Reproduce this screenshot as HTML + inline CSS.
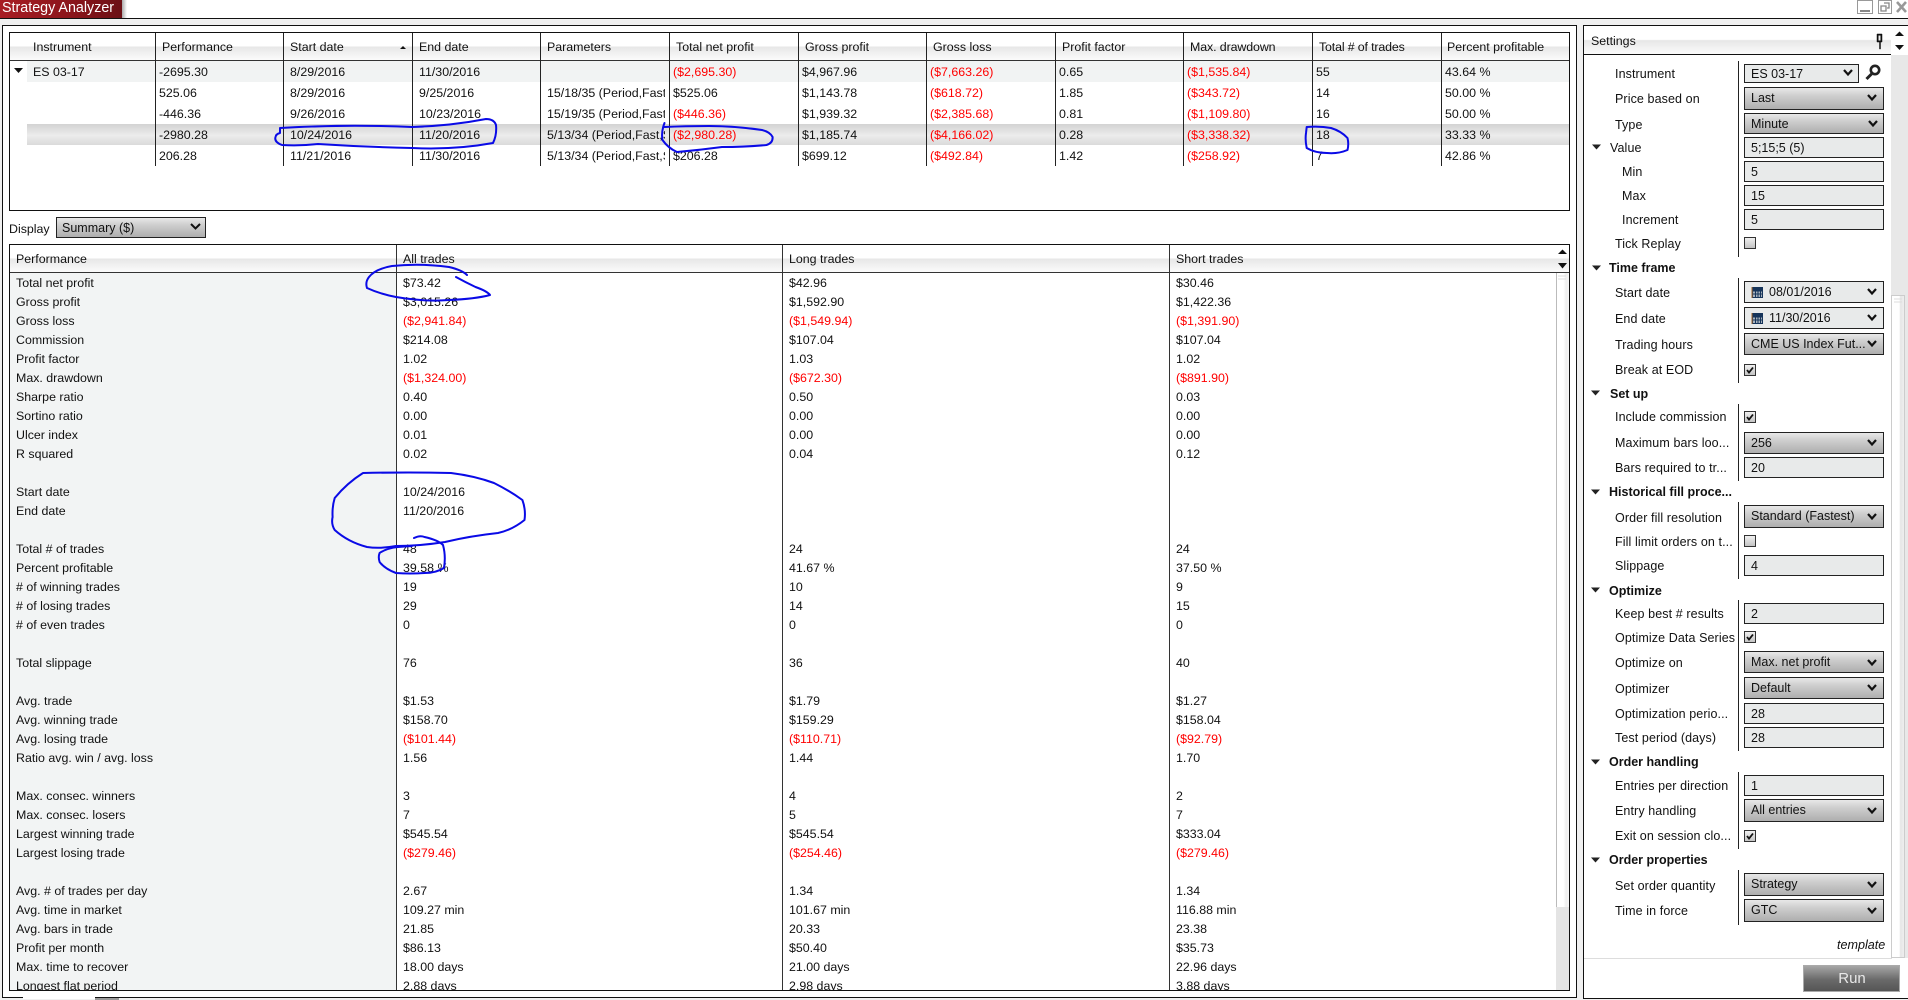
<!DOCTYPE html>
<html>
<head>
<meta charset="utf-8">
<title>Strategy Analyzer</title>
<style>
html,body{margin:0;padding:0;width:1908px;height:1000px;overflow:hidden;background:#f0f0f0}
body{position:relative;font-family:"Liberation Sans",Arial,sans-serif;font-size:12.4px;color:#111}
div,span{position:absolute;box-sizing:border-box}
span{white-space:nowrap}
.col{white-space:pre;line-height:21px}
.pc{white-space:pre;line-height:19px}
.r{color:#f00}
.hd{background:linear-gradient(#fff 0,#fff 48%,#e7e7e7 52%,#fbfbfb 100%)}
.ln{width:1px;background:#222}
.h{top:38px;line-height:18px}
.h2{top:250px;line-height:18px}
.lb{left:1615px;line-height:18px;font-size:12.5px;letter-spacing:.1px}
.lb2{left:1622px;line-height:18px;font-size:12.5px;letter-spacing:.1px}
.sec{left:1609px;line-height:18px;font-size:12.5px;font-weight:bold}
.sel{left:1744px;width:140px;border:1px solid #222;background:linear-gradient(#e8e8e8,#cfcfcf 35%,#aeaeae 100%);line-height:21px;padding-left:6px;font-size:12.5px}
.inp{left:1744px;width:140px;border:1px solid #222;background:#e8eaea;line-height:20px;padding-left:6px;font-size:12.5px}
.chk{left:1744px;width:12px;height:12px;border:1px solid #333;background:linear-gradient(#f0f0f0,#c4c4c4)}
.v{left:1738px;width:1px;background:#222}
svg{position:absolute;overflow:visible}
</style>
</head>
<body>

<!-- top strip -->
<div style="left:0;top:0;width:1908px;height:18px;background:#fff"></div>
<div style="left:122px;top:0;width:5px;height:18px;background:linear-gradient(90deg,#aaa,#fff)"></div>
<div style="left:0;top:0;width:122px;height:18px;background:linear-gradient(90deg,#a81d24,#8a151b 60%,#6b1015);color:#fff;font-size:14.3px;line-height:16px;padding-left:2px;overflow:hidden">Strategy Analyzer</div>
<div style="left:0;top:18px;width:1908px;height:1px;background:#111"></div>

<!-- window buttons -->
<svg style="left:0;top:0" width="1908" height="18" fill="none">
<rect x="1857.5" y="0.5" width="15" height="13" stroke="#999"/><path d="M1860 11h10" stroke="#888" stroke-width="2"/>
<rect x="1878.5" y="0.5" width="13" height="13" stroke="#999"/><path d="M1884 3h5v5h-2M1881 6h5v5h-5z" stroke="#888" stroke-width="1.3"/>
<path d="M1897 2l9 10M1906 2l-9 10" stroke="#999" stroke-width="2.6"/>
</svg>

<!-- left panel -->
<div style="left:2px;top:25px;width:1575px;height:973px;background:#fff;border:1px solid #111;border-left-width:1px"></div>
<div style="left:23px;top:996px;width:72px;height:3px;background:#fff"></div>
<div style="left:95px;top:998px;width:24px;height:2px;background:#999"></div>

<!-- top grid -->
<div style="left:9px;top:32px;width:1561px;height:179px;border:1px solid #111;background:#fff"></div>
<div class="hd" style="left:10px;top:33px;width:1559px;height:27px"></div>
<div style="left:10px;top:60px;width:1559px;height:1px;background:#333"></div>
<div style="left:27px;top:61px;width:1542px;height:21px;background:#f1f3f3"></div>
<div style="left:27px;top:124px;width:1542px;height:21px;background:linear-gradient(#d3d3d3,#ececec 55%,#dadada)"></div>

<div class="ln" style="left:155px;top:33px;height:133px"></div>
<div class="ln" style="left:283px;top:33px;height:133px"></div>
<div class="ln" style="left:412px;top:33px;height:133px"></div>
<div class="ln" style="left:540px;top:33px;height:133px"></div>
<div class="ln" style="left:669px;top:33px;height:133px"></div>
<div class="ln" style="left:798px;top:33px;height:133px"></div>
<div class="ln" style="left:926px;top:33px;height:133px"></div>
<div class="ln" style="left:1055px;top:33px;height:133px"></div>
<div class="ln" style="left:1183px;top:33px;height:133px"></div>
<div class="ln" style="left:1312px;top:33px;height:133px"></div>
<div class="ln" style="left:1441px;top:33px;height:133px"></div>

<span class="h" style="left:33px">Instrument</span>
<span class="h" style="left:162px">Performance</span>
<span class="h" style="left:290px">Start date</span>
<span class="h" style="left:419px">End date</span>
<span class="h" style="left:547px">Parameters</span>
<span class="h" style="left:676px">Total net profit</span>
<span class="h" style="left:805px">Gross profit</span>
<span class="h" style="left:933px">Gross loss</span>
<span class="h" style="left:1062px">Profit factor</span>
<span class="h" style="left:1190px;letter-spacing:-.1px">Max. drawdown</span>
<span class="h" style="left:1319px;letter-spacing:-.15px">Total # of trades</span>
<span class="h" style="left:1447px">Percent profitable</span>
<svg style="left:0;top:0" width="10" height="10"><path d="M400 49h6l-3-3z" fill="#111"/><path d="M14 68h9l-4.500 5z" fill="#111"/></svg>

<div class="col" style="left:33px;top:62px">ES 03-17</div>
<div class="col" style="left:159px;top:62px">-2695.30
525.06
-446.36
-2980.28
206.28</div>
<div class="col" style="left:290px;top:62px">8/29/2016
8/29/2016
9/26/2016
10/24/2016
11/21/2016</div>
<div class="col" style="left:419px;top:62px">11/30/2016
9/25/2016
10/23/2016
11/20/2016
11/30/2016</div>
<div class="col" style="left:547px;top:62px;width:118px;height:105px;overflow:hidden"> 
15/18/35 (Period,Fast,Slow)
15/19/35 (Period,Fast,Slow)
5/13/34 (Period,Fast,Slow)
5/13/34 (Period,Fast,Slow)</div>
<div class="col r" style="left:673px;top:62px">($2,695.30)</div>
<div class="col" style="left:673px;top:83px">$525.06</div>
<div class="col r" style="left:673px;top:104px">($446.36)
($2,980.28)</div>
<div class="col" style="left:673px;top:146px">$206.28</div>
<div class="col" style="left:802px;top:62px">$4,967.96
$1,143.78
$1,939.32
$1,185.74
$699.12</div>
<div class="col r" style="left:930px;top:62px">($7,663.26)
($618.72)
($2,385.68)
($4,166.02)
($492.84)</div>
<div class="col" style="left:1059px;top:62px">0.65
1.85
0.81
0.28
1.42</div>
<div class="col r" style="left:1187px;top:62px">($1,535.84)
($343.72)
($1,109.80)
($3,338.32)
($258.92)</div>
<div class="col" style="left:1316px;top:62px">55
14
16
18
7</div>
<div class="col" style="left:1445px;top:62px">43.64 %
50.00 %
50.00 %
33.33 %
42.86 %</div>

<!-- display -->
<span style="left:9px;top:220px;line-height:18px">Display</span>
<div class="sel" style="left:56px;top:217px;width:150px;height:21px;line-height:20px;padding-left:5px">Summary ($)</div>
<svg style="left:0;top:0" width="10" height="10" fill="none"><path d="M191 224l4.500 4.500 4.500-4.500" stroke="#111" stroke-width="2"/></svg>

<!-- performance grid -->
<div style="left:9px;top:244px;width:1561px;height:747px;border:1px solid #111;background:#fff"></div>
<div class="hd" style="left:10px;top:245px;width:1559px;height:27px"></div>
<div style="left:10px;top:272px;width:1559px;height:1px;background:#333"></div>
<div style="left:10px;top:273px;width:386px;height:717px;background:#f2f4f4"></div>
<div class="ln" style="left:396px;top:245px;height:745px;background:#333"></div>
<div class="ln" style="left:782px;top:245px;height:745px;background:#333"></div>
<div class="ln" style="left:1169px;top:245px;height:745px;background:#333"></div>
<span class="h2" style="left:16px">Performance</span>
<span class="h2" style="left:403px">All trades</span>
<span class="h2" style="left:789px">Long trades</span>
<span class="h2" style="left:1176px">Short trades</span>

<div class="pc" style="left:16px;top:274px;width:370px;height:716px;overflow:hidden">Total net profit
Gross profit
Gross loss
Commission
Profit factor
Max. drawdown
Sharpe ratio
Sortino ratio
Ulcer index
R squared
 
Start date
End date
 
Total # of trades
Percent profitable
# of winning trades
# of losing trades
# of even trades
 
Total slippage
 
Avg. trade
Avg. winning trade
Avg. losing trade
Ratio avg. win / avg. loss
 
Max. consec. winners
Max. consec. losers
Largest winning trade
Largest losing trade
 
Avg. # of trades per day
Avg. time in market
Avg. bars in trade
Profit per month
Max. time to recover
Longest flat period</div>

<div class="pc" style="left:403px;top:274px;width:370px;height:716px;overflow:hidden">$73.42
$3,015.26
<b class="r" style="font-weight:normal">($2,941.84)</b>
$214.08
1.02
<b class="r" style="font-weight:normal">($1,324.00)</b>
0.40
0.00
0.01
0.02
 
10/24/2016
11/20/2016
 
48
39.58 %
19
29
0
 
76
 
$1.53
$158.70
<b class="r" style="font-weight:normal">($101.44)</b>
1.56
 
3
7
$545.54
<b class="r" style="font-weight:normal">($279.46)</b>
 
2.67
109.27 min
21.85
$86.13
18.00 days
2.88 days</div>

<div class="pc" style="left:789px;top:274px;width:370px;height:716px;overflow:hidden">$42.96
$1,592.90
<b class="r" style="font-weight:normal">($1,549.94)</b>
$107.04
1.03
<b class="r" style="font-weight:normal">($672.30)</b>
0.50
0.00
0.00
0.04
 
 
 
 
24
41.67 %
10
14
0
 
36
 
$1.79
$159.29
<b class="r" style="font-weight:normal">($110.71)</b>
1.44
 
4
5
$545.54
<b class="r" style="font-weight:normal">($254.46)</b>
 
1.34
101.67 min
20.33
$50.40
21.00 days
2.98 days</div>

<div class="pc" style="left:1176px;top:274px;width:370px;height:716px;overflow:hidden">$30.46
$1,422.36
<b class="r" style="font-weight:normal">($1,391.90)</b>
$107.04
1.02
<b class="r" style="font-weight:normal">($891.90)</b>
0.03
0.00
0.00
0.12
 
 
 
 
24
37.50 %
9
15
0
 
40
 
$1.27
$158.04
<b class="r" style="font-weight:normal">($92.79)</b>
1.70
 
2
7
$333.04
<b class="r" style="font-weight:normal">($279.46)</b>
 
1.34
116.88 min
23.38
$35.73
22.96 days
3.88 days</div>

<!-- perf scrollbar -->
<div style="left:1556px;top:273px;width:13px;height:634px;background:linear-gradient(90deg,#fff,#fff 55%,#eee 75%,#f6f6f6);border-left:1px solid #bbb"></div>
<div style="left:1556px;top:907px;width:13px;height:83px;background:#e4e4e4"></div>
<svg style="left:0;top:0" width="10" height="10" fill="none">
<path d="M1558 254h9l-4.500-4.500z" fill="#111"/><path d="M1558 263h9l-4.500 5.500z" fill="#111"/>
<path d="M1558 276h8M1558 279h8" stroke="#ddd"/>
</svg>

<!-- settings panel -->
<div style="left:1583px;top:25px;width:326px;height:974px;background:#fff;border:1px solid #111"></div>
<div class="hd" style="left:1584px;top:26px;width:307px;height:28px"></div>
<div style="left:1584px;top:54px;width:307px;height:1px;background:#111"></div>
<span style="left:1591px;top:32px;line-height:18px">Settings</span>
<div style="left:1891px;top:26px;width:17px;height:29px;background:#fff"></div>
<div style="left:1891px;top:55px;width:17px;height:240px;background:#e8e8e8"></div>
<div style="left:1891px;top:295px;width:17px;height:663px;background:#e8e8e8"></div>
<div style="left:1891px;top:295px;width:14px;height:663px;border:1px solid #ccc;background:linear-gradient(90deg,#fff,#fff 60%,#e6e6e6 70%,#eee)"></div>
<div style="left:1584px;top:958px;width:308px;height:1px;background:#ddd"></div>
<svg style="left:0;top:0" width="10" height="10" fill="none">
<path d="M1895 36h9l-4.500-4.500z" fill="#111"/><path d="M1895 45h9l-4.500 5z" fill="#111"/>
<path d="M1877 34h5v8h-1.500v7h-1v-7h-2.500z" fill="#111" stroke="#111" stroke-width=".5"/>
<path d="M1878.500 35.500h2v5h-2z" fill="#eee"/>
<path d="M1894 299h8M1894 302h8" stroke="#ddd"/>
</svg>

<!-- settings vertical lines -->
<div class="v" style="top:61px;height:196px"></div>
<div class="v" style="top:278px;height:105px"></div>
<div class="v" style="top:404px;height:77px"></div>
<div class="v" style="top:502px;height:77px"></div>
<div class="v" style="top:600px;height:151px"></div>
<div class="v" style="top:772px;height:77px"></div>
<div class="v" style="top:870px;height:55px"></div>

<!-- settings labels -->
<span class="lb" style="top:65px">Instrument</span>
<span class="lb" style="top:90px">Price based on</span>
<span class="lb" style="top:116px">Type</span>
<span class="lb" style="left:1610px;top:139px">Value</span>
<span class="lb2" style="top:163px">Min</span>
<span class="lb2" style="top:187px">Max</span>
<span class="lb2" style="top:211px">Increment</span>
<span class="lb" style="top:235px">Tick Replay</span>
<span class="sec" style="top:259px">Time frame</span>
<span class="lb" style="top:284px">Start date</span>
<span class="lb" style="top:310px">End date</span>
<span class="lb" style="top:336px">Trading hours</span>
<span class="lb" style="top:361px">Break at EOD</span>
<span class="sec" style="top:385px;left:1610px">Set up</span>
<span class="lb" style="top:408px">Include commission</span>
<span class="lb" style="top:434px">Maximum bars loo...</span>
<span class="lb" style="top:459px">Bars required to tr...</span>
<span class="sec" style="top:483px">Historical fill proce...</span>
<span class="lb" style="top:509px">Order fill resolution</span>
<span class="lb" style="top:533px">Fill limit orders on t...</span>
<span class="lb" style="top:557px">Slippage</span>
<span class="sec" style="top:582px">Optimize</span>
<span class="lb" style="top:605px">Keep best # results</span>
<span class="lb" style="top:629px">Optimize Data Series</span>
<span class="lb" style="top:654px">Optimize on</span>
<span class="lb" style="top:680px">Optimizer</span>
<span class="lb" style="top:705px">Optimization perio...</span>
<span class="lb" style="top:729px">Test period (days)</span>
<span class="sec" style="top:753px">Order handling</span>
<span class="lb" style="top:777px">Entries per direction</span>
<span class="lb" style="top:802px">Entry handling</span>
<span class="lb" style="top:827px">Exit on session clo...</span>
<span class="sec" style="top:851px">Order properties</span>
<span class="lb" style="top:877px">Set order quantity</span>
<span class="lb" style="top:902px">Time in force</span>
<span style="left:1837px;top:936px;line-height:18px;font-style:italic;font-size:12.6px">template</span>

<!-- controls -->
<div class="inp" style="top:64px;width:115px;height:19px;line-height:18px">ES 03-17</div>
<div class="sel" style="top:87px;height:23px">Last</div>
<div class="sel" style="top:113px;height:21px;line-height:20px">Minute</div>
<div class="inp" style="top:137px;height:21px">5;15;5 (5)</div>
<div class="inp" style="top:161px;height:21px">5</div>
<div class="inp" style="top:185px;height:21px">15</div>
<div class="inp" style="top:209px;height:21px">5</div>
<div class="chk" style="top:237px"></div>
<div class="inp" style="top:281px;height:22px;line-height:21px;padding-left:24px">08/01/2016</div>
<div class="inp" style="top:307px;height:22px;line-height:21px;padding-left:24px">11/30/2016</div>
<div class="sel" style="top:333px;height:22px">CME US Index Fut...</div>
<div class="chk" style="top:364px"></div>
<div class="chk" style="top:411px"></div>
<div class="sel" style="top:432px;height:22px">256</div>
<div class="inp" style="top:457px;height:21px">20</div>
<div class="sel" style="top:505px;height:23px">Standard (Fastest)</div>
<div class="chk" style="top:535px"></div>
<div class="inp" style="top:555px;height:21px">4</div>
<div class="inp" style="top:603px;height:21px">2</div>
<div class="chk" style="top:631px"></div>
<div class="sel" style="top:651px;height:22px">Max. net profit</div>
<div class="sel" style="top:677px;height:22px">Default</div>
<div class="inp" style="top:703px;height:21px">28</div>
<div class="inp" style="top:727px;height:21px">28</div>
<div class="inp" style="top:775px;height:21px">1</div>
<div class="sel" style="top:799px;height:23px">All entries</div>
<div class="chk" style="top:830px"></div>
<div class="sel" style="top:873px;height:23px">Strategy</div>
<div class="sel" style="top:899px;height:23px">GTC</div>

<!-- Run -->
<div style="left:1803px;top:965px;width:97px;height:27px;border:1px solid #aaa;background:linear-gradient(#a6a6a6,#6a6a6a 55%,#555);color:#e8e8e8;font-size:15px;line-height:26px;text-align:center;padding-left:1px">Run</div>

<!-- settings icons -->
<svg style="left:0;top:0" width="10" height="10" fill="none">
<g fill="#222">
<path d="M1592 144.500h9l-4.500 5z"/><path d="M1592 265.500h9l-4.500 5z"/><path d="M1591 390.500h9l-4.500 5z"/><path d="M1591 489.500h9l-4.500 5z"/><path d="M1591 587.500h9l-4.500 5z"/><path d="M1591 759.500h9l-4.500 5z"/><path d="M1591 857.500h9l-4.500 5z"/>
</g>
<g stroke="#111" stroke-width="2.200">
<path d="M1844 70l4 4.500 4-4.500"/>
<path d="M1868 95l4 4.500 4-4.500"/>
<path d="M1869 121l4 4.500 4-4.500"/>
<path d="M1868 289l4 4.500 4-4.500"/>
<path d="M1868 315l4 4.500 4-4.500"/>
<path d="M1868 341l4 4.500 4-4.500"/>
<path d="M1868 440l4 4.500 4-4.500"/>
<path d="M1868 514l4 4.500 4-4.500"/>
<path d="M1868 660l4 4.500 4-4.500"/>
<path d="M1868 685l4 4.500 4-4.500"/>
<path d="M1868 808l4 4.500 4-4.500"/>
<path d="M1868 882l4 4.500 4-4.500"/>
<path d="M1868 908l4 4.500 4-4.500"/>
</g>
<!-- magnifier -->
<circle cx="1875" cy="70" r="4.200" stroke="#222" stroke-width="2.600"/>
<path d="M1871.500 74l-5 5" stroke="#222" stroke-width="3"/>
<!-- calendars -->
<g>
<rect x="1752" y="287" width="11" height="11" fill="#16345a"/><path d="M1753 291.500h9v5.500h-9z" fill="#a8b2bc"/><path d="M1755.500 291v6M1758 291v6M1760.500 291v6M1753 294h9" stroke="#16345a"/><path d="M1752 287v11" stroke="#a0642a"/>
<rect x="1752" y="313" width="11" height="11" fill="#16345a"/><path d="M1753 317.500h9v5.500h-9z" fill="#a8b2bc"/><path d="M1755.500 317v6M1758 317v6M1760.500 317v6M1753 320h9" stroke="#16345a"/><path d="M1752 313v11" stroke="#a0642a"/>
</g>
<!-- checks -->
<g stroke="#111" stroke-width="1.800">
<path d="M1747 370l2 2.500 4-5"/>
<path d="M1747 417l2 2.500 4-5"/>
<path d="M1747 637l2 2.500 4-5"/>
<path d="M1747 836l2 2.500 4-5"/>
</g>
</svg>

<!-- blue annotations -->
<svg style="left:0;top:0" width="1908" height="1000" fill="none" stroke="#0a0ae6" stroke-width="2" stroke-linecap="round" stroke-linejoin="round">
<path d="M280 128Q345 124 412 127Q450 126 486 119Q494 119 496 125Q497 135 493 143Q455 150 412 148Q365 147 318 144Q300 146 282 145Q274 142 275.500 137Q276 134 280 133L280 128"/>
<path d="M467 275Q462 270 449 267Q420 263 392 266Q375 269 369 277Q365 282 367 288Q380 294 396 297Q425 302 449 300Q475 299 490 295Q487 291 475.500 287Q465 282 456 277"/>
<path d="M664.500 123Q661 132 662.500 140Q668 148 677 152Q700 150 722 147Q745 147 766.500 145Q773 143 772.600 137Q770 132 762 130Q735 126 709 126Q685 126 664.500 127"/>
<path d="M1306.700 127Q1320 126 1331 128Q1341 131 1347.500 138Q1349 144 1347.500 150Q1338 154 1327 153Q1315 153 1306.700 148Q1305 140 1306 133L1306.700 127"/>
<path d="M363 473Q410 472 451 473Q475 476 494 483Q510 491 522.400 500Q526 510 524.500 520Q512 530 498 533Q470 536 445 542Q420 546 396 546Q380 549 367 547Q348 542 334.700 530Q331 524 332.600 517Q332 507 334.700 498Q347 483 363 473"/>
<path d="M414 538Q420 535 424.500 537Q438 540 443 545Q446 556 444 568Q436 573 424.500 573Q410 574 396 573Q385 569 379.600 562Q378 557 379.600 553Q387 548 398 547L412 546"/>
</svg>

</body>
</html>
